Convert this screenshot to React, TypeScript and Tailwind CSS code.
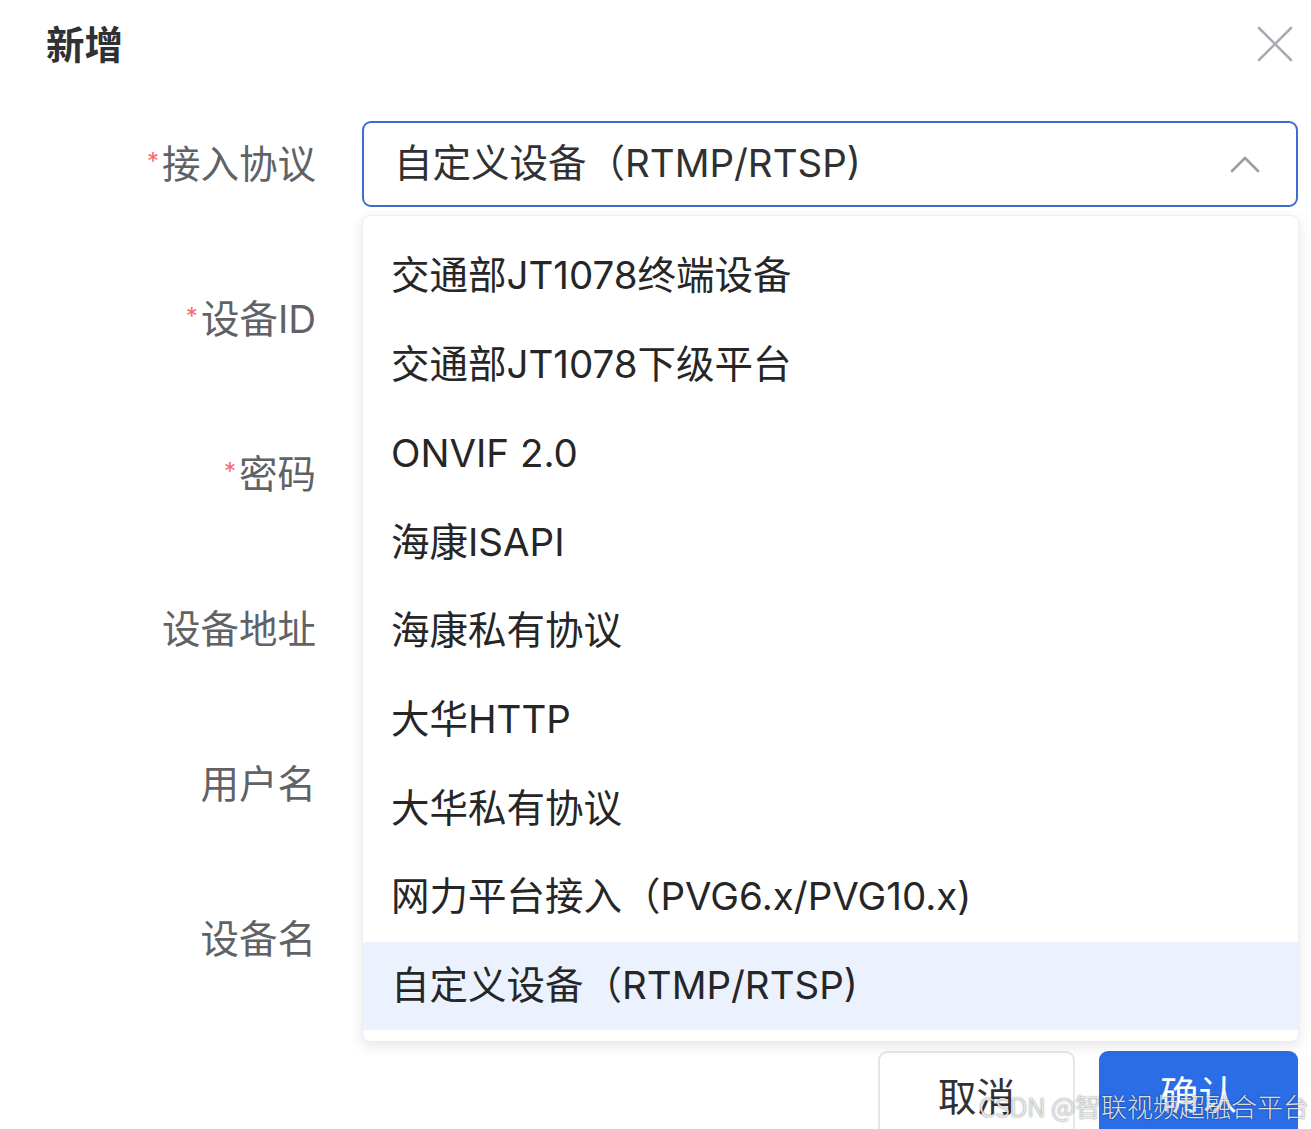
import React from "react";

const FONT = { fontFamily: 'Inter, "Noto Sans CJK SC", sans-serif' };

const items = [
  "交通部JT1078终端设备",
  "交通部JT1078下级平台",
  "ONVIF 2.0",
  "海康ISAPI",
  "海康私有协议",
  "大华HTTP",
  "大华私有协议",
  "网力平台接入（PVG6.x/PVG10.x)",
  "自定义设备（RTMP/RTSP)",
];

const rows: { label: string; required: boolean }[] = [
  { label: "接入协议", required: true },
  { label: "设备ID", required: true },
  { label: "密码", required: true },
  { label: "设备地址", required: false },
  { label: "用户名", required: false },
  { label: "设备名", required: false },
];

export default function App() {
  return (
    <div
      className="relative w-[1311px] h-[1129px] overflow-hidden bg-white text-[#303133]"
      style={FONT}
    >
      {/* Header */}
      <div className="flex h-[121px] items-start justify-between pl-[46px] pr-[16px] pt-[20px]">
        <div className="text-[38.5px] font-bold leading-[50px] text-[#303133]">新增</div>
        <svg width="40" height="40" viewBox="0 0 40 40" className="mt-[4px]">
          <path d="M4 4 L36 36 M36 4 L4 36" stroke="#a8abb2" strokeWidth="2.6" strokeLinecap="round" />
        </svg>
      </div>

      {/* Form */}
      <div className="flex flex-col gap-[69px]">
        {rows.map((r, i) => (
          <div key={r.label} className="flex h-[86px] items-center">
            <div className="flex w-[318px] shrink-0 items-center justify-end pr-[2px] text-[38.5px] leading-none text-[#606266]">
              {r.required && <span className="mr-[3px] text-[24px] text-[#f56c6c] -translate-y-[2px]">*</span>}
              <span>{r.label}</span>
            </div>
            <div className="ml-[44px] w-[936px]">
              {i === 0 ? (
                <div className="flex h-[86px] items-center justify-between rounded-[9px] border-2 border-[#3a6ed2] pl-[30px] pr-[36px]">
                  <span className="text-[38.5px] text-[#303133]">自定义设备（RTMP/RTSP)</span>
                  <svg width="30" height="18" viewBox="0 0 30 18">
                    <path d="M2 16 L15 3 L28 16" fill="none" stroke="#9a9da4" strokeWidth="2.6" strokeLinecap="round" strokeLinejoin="round" />
                  </svg>
                </div>
              ) : (
                <div className="h-[86px] rounded-[9px] border-2 border-[#dcdfe6]" />
              )}
            </div>
          </div>
        ))}
      </div>

      {/* Footer buttons */}
      <div className="mt-[69px] flex justify-end gap-[24px] pr-[13px]">
        <button className="flex h-[90px] w-[197px] items-start justify-center rounded-[9px] border-2 border-[#e4e6ea] bg-white pt-[16px] text-[38.5px] text-[#303133]">
          取消
        </button>
        <button className="flex h-[90px] w-[199px] items-start justify-center rounded-[9px] bg-[#2a6de6] pt-[16px] text-[38.5px] text-white">
          确认
        </button>
      </div>

      {/* Dropdown */}
      <div className="absolute left-[362px] top-[215px] w-[937px] rounded-[8px] border border-[#ebeef5] bg-white pb-[11px] pt-[16px] shadow-[0_4px_14px_rgba(0,0,0,0.10)]">
        {items.map((it, i) => (
          <div
            key={it}
            className={`flex h-[88.7px] items-center pl-[28px] text-[38.5px] text-[#262626] ${
              i === items.length - 1 ? "bg-[#ebf2fe]" : ""
            }`}
          >
            {it}
          </div>
        ))}
      </div>

      {/* Watermark */}
      <div
        className="absolute left-[979px] top-[1088px] whitespace-nowrap text-[26px] font-light leading-[36px] text-[#f2f2f2]/90 [text-shadow:0_0_2px_rgba(0,0,0,0.6)]"
        style={{ fontFamily: '"Noto Sans CJK SC", sans-serif' }}
      >
        CSDN @智联视频超融合平台
      </div>
    </div>
  );
}
